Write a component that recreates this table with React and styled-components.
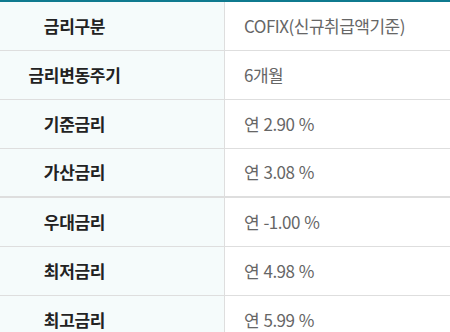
import React from "react";
import styled, { createGlobalStyle } from "styled-components";

const Global = createGlobalStyle`
    html, body {
        margin: 0;
        padding: 0;
        background: #fff;
    }
    body {
        font-family: "Noto Sans CJK KR", "Noto Sans", sans-serif;
    }
`;

// 금리 정보 표
const Table = styled.div`
    width: 450px;
    border-top: 2px solid #0f7a8f;
`;

const Row = styled.div`
    display: grid;
    grid-template-columns: 225px 1fr;
    height: ${(p) => (p.$thick ? "47px" : "48px")};
    border-bottom: ${(p) => (p.$thick ? "2px" : "1px")} solid #dedede;
`;

const Head = styled.div`
    display: flex;
    align-items: center;
    justify-content: center;
    padding: 0 75px 2px 0;
    background-color: #f5fbfb;
    border-right: 1px solid #dedede;
    font-size: 17px;
    font-weight: 700;
    color: #222;
    letter-spacing: -0.3px;
`;

const Value = styled.div`
    display: flex;
    align-items: center;
    padding: 0 0 2px 19px;
    font-size: 17px;
    color: #666;
    letter-spacing: -0.5px;
    word-spacing: 1px;
`;

const rows = [
    { label: "금리구분", value: "COFIX(신규취급액기준)" },
    { label: "금리변동주기", value: "6개월" },
    { label: "기준금리", value: "연 2.90 %" },
    { label: "가산금리", value: "연 3.08 %", thick: true },
    { label: "우대금리", value: "연 -1.00 %" },
    { label: "최저금리", value: "연 4.98 %" },
    { label: "최고금리", value: "연 5.99 %" },
];

function App() {
    return (
        <>
            <Global />
            <Table>
                {rows.map((r) => (
                    <Row key={r.label} $thick={r.thick}>
                        <Head>{r.label}</Head>
                        <Value>{r.value}</Value>
                    </Row>
                ))}
            </Table>
        </>
    );
}

export default App;
